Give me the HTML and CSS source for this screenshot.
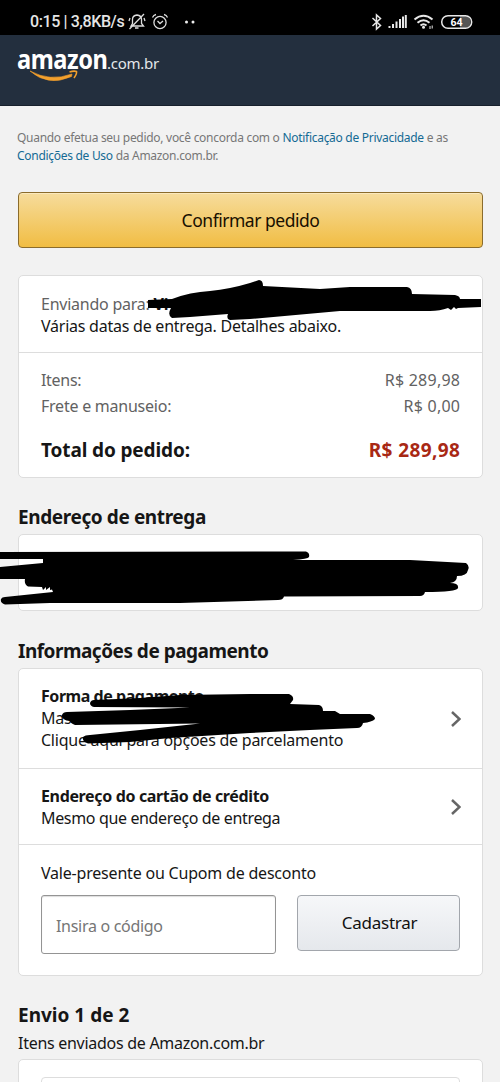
FILE: index.html
```html
<!DOCTYPE html>
<html lang="pt-BR">
<head>
<meta charset="utf-8">
<title>Confirmar pedido</title>
<link rel="stylesheet" href="styles.css">
</head>
<body>
<div class="screen">
  <div class="status">
    <span class="clock">0:15 | 3,8KB/s</span>
    <svg class="status-icons-left" viewBox="128 10 70 24" width="70" height="24" fill="none" stroke="#ddd" stroke-width="1.3">
      <path d="M131 26h12.500l-2-2.500v-4q0-4-4.500-4.500q-4.500.5-4.500 4.500v4zM135 28h3.500M144 14L129.500 29M130 18l-1 3M144 18l1 3"/>
      <circle cx="160" cy="22.500" r="6.100"/><path d="M157.500 21l2.500 2.500 3-2.500M152.500 17.500q1-2.500 3.500-3M164 14.500q2.500.5 3.500 3"/>
      <g fill="#eee" stroke="none"><circle cx="186.500" cy="22" r="1.500"/><circle cx="193" cy="22" r="1.500"/></g>
    </svg>
    <svg class="status-icons-right" viewBox="370 10 104 24" width="104" height="24" fill="none" stroke="#e8e8e8">
      <path stroke-width="1.500" d="M372.500 18l8 7.500-4 3.500V15l4 3.500-8 7.500"/>
      <path stroke-width="2" d="M389.500 28v-2M393 28v-4M396.500 28v-6.500M400 28v-9M403 28V16.500M405.800 28V15"/>
      <path stroke-width="2" d="M414.500 19.500q9-7.500 18 0M417.500 22.800q6-5 12 0M420.500 25.500q3-2.500 6 0"/>
      <circle cx="423.500" cy="27.200" r="1.500" fill="#e8e8e8" stroke="none"/>
      <path stroke-width="1" d="M430 26v3M432.200 25.500v3"/>
      <path d="M460 16h5q5.500.5 5.500 6t-5.500 6h-5z" fill="#555" stroke="none"/>
      <rect x="441.700" y="15.700" width="30" height="12.600" rx="6.300" stroke-width="1.500"/>
      <text class="battery" x="456.500" y="26" text-anchor="middle">64</text>
    </svg>
  </div>

  <header class="header">
    <div class="logo"><span class="logo-name">amazon</span><span class="logo-domain">.com.br</span>
      <svg class="smile" viewBox="29 68 50 15" width="50" height="15">
        <path d="M30 71Q50 82 72 74L71.500 76.500Q48 87 30 71Z" fill="#f3a02c" stroke="#f3a02c" stroke-width=".6"/>
        <path d="M69.500 72Q74 70.500 76.500 71.500Q77 74 74 78" fill="none" stroke="#f3a02c" stroke-width="1.600"/>
      </svg>
    </div>
  </header>

  <main class="content">
    <p class="legal"><span class="legal-line">Quando efetua seu pedido, você concorda com o <a>Notificação de Privacidade</a> e as</span><span class="legal-line"><a>Condições de Uso</a> da Amazon.com.br.</span></p>
    <button class="confirm">Confirmar pedido</button>

    <section class="card summary">
      <div class="shipping">
        <p class="muted t-send">Enviando para: <b>Vi</b></p>
        <p class="t-dates">Várias datas de entrega. Detalhes abaixo.</p>
      </div>
      <div class="totals">
        <div class="row muted"><span class="t-items">Itens:</span><span class="t-price">R$ 289,98</span></div>
        <div class="row muted"><span class="t-freight">Frete e manuseio:</span><span class="t-price">R$ 0,00</span></div>
        <div class="row total"><span class="t-total">Total do pedido:</span><span class="total-price">R$ 289,98</span></div>
      </div>
      <svg class="mark" viewBox="18 275 465 203" width="465" height="203">
        <path d="M148 300L172 299Q190 292 210 291Q230 289 250 283L259 280Q263 280 263 286L320 289L350 287L407 287Q412 288 412 294L455 295Q460 296 460 299L481 299V307L458 308 456 309 454 307 451 310 448 308Q440 311 430 311L340 311L250 319L230 320Q226 319 228 314L190 317L172 318Q167 315 171 308L148 308Z"/>
      </svg>
    </section>

    <h2 class="t-address">Endereço de entrega</h2>
    <section class="card address">
      <svg class="mark" viewBox="18 534 465 77" width="465" height="77">
        <path d="M0 552L306 551.500Q310 553 309 557Q308 559 293 560L410 560L466 563Q470 566 468 570Q467 576 457 576Q457 582 450 583Q459 583 458 588Q457 592 425 592Q424 596 420 596L284 596.500Q283 600 278 600L180 603L50 603L5 604.500Q0 603 1 599Q2 597 5 597L53 592L52 589.500 50 590 50 587 46 590 46 587 43 590 42 587 28 586.500Q24 584 25 579L0 579V567L43 563L43 559H0Z"/>
      </svg>
    </section>

    <h2 class="t-payment">Informações de pagamento</h2>
    <section class="card payment">
      <div class="option method">
        <div class="lines"><p><b class="t-method">Forma de pagamento</b></p><p class="t-card">Mas</p><p class="t-click">Clique aqui para opções de parcelamento</p></div>
        <svg class="chevron" viewBox="0 0 10 16" width="10" height="16"><path d="M1 1l7.500 7L1 15"/></svg>
      </div>
      <div class="option billing">
        <div><p><b class="t-billing">Endereço do cartão de crédito</b></p><p class="t-same">Mesmo que endereço de entrega</p></div>
        <svg class="chevron" viewBox="0 0 10 16" width="10" height="16"><path d="M1 1l7.500 7L1 15"/></svg>
      </div>
      <div class="voucher">
        <p class="t-voucher">Vale-presente ou Cupom de desconto</p>
        <div class="voucher-row"><div class="field">Insira o código</div><button class="redeem">Cadastrar</button></div>
      </div>
      <svg class="mark" viewBox="18 668 465 308" width="465" height="308">
        <path d="M94 700L140 698L180 695L250 694H289Q294 696 293 700L290 704L319 705Q323 706 323 711H335L340 714H370Q375 716 375 719Q372 722 363 723Q362 728 357 728L310 730L250 733L170 738L130 742L88 743.500Q82 742 83 737Q85 735 90 735L140 730L200 723.500L75 725Q70 723 70 721Q61 720 62 715Q63 712 67 712L130 710L190 707.500L94 707Q90 706 90 703Q91 700 94 700Z"/>
      </svg>
    </section>

    <h2 class="t-shipment">Envio 1 de 2</h2>
    <p class="t-sent">Itens enviados de Amazon.com.br</p>
    <section class="card shipment"><div class="shipment-box"></div></section>
  </main>
</div>
</body>
</html>
```
FILE: styles.css
```css
* { box-sizing: border-box; }
body { margin: 0; background: #f2f2f2; color: #161616; font: 16px/22px "Noto Sans", sans-serif; }
p, h2 { margin: 0; white-space: nowrap; }
.screen { height: 1082px; overflow: hidden; }
.status { height: 35px; background: #000; color: #e5e5e5; display: flex; align-items: flex-start; padding: 10px 26px 0 30px; }
.clock { font: 500 16px/24px Roboto, sans-serif; width: 98px; white-space: pre; letter-spacing: -0.4px; }
.status-icons-right { margin-left: auto; }
.battery { font: 700 10.5px Roboto, sans-serif; fill: #fff; stroke: none; }
.header { height: 71px; background: #232f3e; border-bottom: 1px solid #17202c; padding: 10px 17px; }
.logo { position: relative; display: flex; align-items: baseline; line-height: 28px; color: #fff; }
.logo-name { font-size: 27px; font-weight: 700; letter-spacing: -0.5px; width: 90px; transform: scaleX(0.875); transform-origin: left; }
.logo-domain { font-size: 15px; letter-spacing: -0.25px; color: #e4e7ea; }
.smile { position: absolute; left: 12px; top: 23px; }
.content { padding: 23px 17px 0 18px; }
.legal { font-size: 12px; line-height: 18px; letter-spacing: -0.29px; color: #777; margin-left: -1px; height: 36px; }
.legal-line { display: block; }
.legal a { color: #146a94; }
.confirm { display: block; width: 465px; height: 56px; margin-top: 27px; border: 1px solid #8b6c2c; border-radius: 4px; background: linear-gradient(#f6dc9c, #f1bd43); box-shadow: inset 0 1px #fbe9bd; color: #191000; font: 17.5px "Noto Sans", sans-serif; letter-spacing: -0.48px; padding: 0 0 1px; }
.card { position: relative; background: #fff; border: 1px solid #ddd; border-radius: 5px; }
.mark { position: absolute; left: -1px; top: -1px; overflow: visible; }
.muted { color: #626262; }
.t-send b { color: #111; }
.t-send, .t-dates, .t-freight, .t-click, .t-card { letter-spacing: -0.24px; }
.t-items { letter-spacing: -0.3px; }
.t-price { letter-spacing: 0.25px; margin-right: -0.25px; }
.summary { height: 203px; margin-top: 27px; }
.shipping { height: 77px; padding: 17px 22px 0; border-bottom: 1px solid #ddd; }
.totals { padding: 14px 22px; }
.row { display: flex; justify-content: space-between; height: 26px; line-height: 26px; }
.total { font-size: 19px; font-weight: 700; margin-top: 18px; }
.t-total { letter-spacing: -0.12px; }
.total-price { color: #a82814; letter-spacing: 0.4px; margin-right: -0.4px; }
h2 { font-size: 19px; line-height: 28px; font-weight: 700; }
.t-address { margin-top: 25px; letter-spacing: -0.4px; }
.address { height: 77px; margin-top: 3px; }
.t-payment { margin-top: 26px; letter-spacing: -0.5px; }
.payment { height: 308px; margin-top: 3px; }
.option { display: flex; align-items: center; justify-content: space-between; padding: 0 21px 0 22px; border-bottom: 1px solid #ddd; }
.method { height: 100px; }
.billing { height: 76px; }
.lines { padding-bottom: 2px; }
.t-method { letter-spacing: -0.45px; }
.t-billing, .t-same { letter-spacing: -0.35px; }
.chevron { fill: none; stroke: #666; stroke-width: 2.5; }
.voucher { padding: 17px 22px; }
.t-voucher { letter-spacing: -0.2px; }
.voucher-row { display: flex; justify-content: space-between; align-items: flex-start; margin-top: 11px; }
.field { width: 235px; height: 59px; border: 1px solid #949494; border-radius: 3px; box-shadow: inset 0 1px 1px #ddd; padding: 19px 14px; color: #767676; letter-spacing: -0.3px; }
.redeem { width: 163px; height: 56px; border: 1px solid #a2a6ac; border-radius: 4px; background: linear-gradient(#f6f7f9, #e5e8ec); color: #111; font: 17px "Noto Sans", sans-serif; letter-spacing: -0.28px; padding: 0 0 2px 2px; }
.t-shipment { margin-top: 25px; }
.t-sent { margin-top: 3px; letter-spacing: -0.28px; }
.shipment { height: 60px; margin-top: 5px; padding: 17px 22px 0; }
.shipment-box { height: 60px; border: 1px solid #ddd; border-radius: 4px; }
```
